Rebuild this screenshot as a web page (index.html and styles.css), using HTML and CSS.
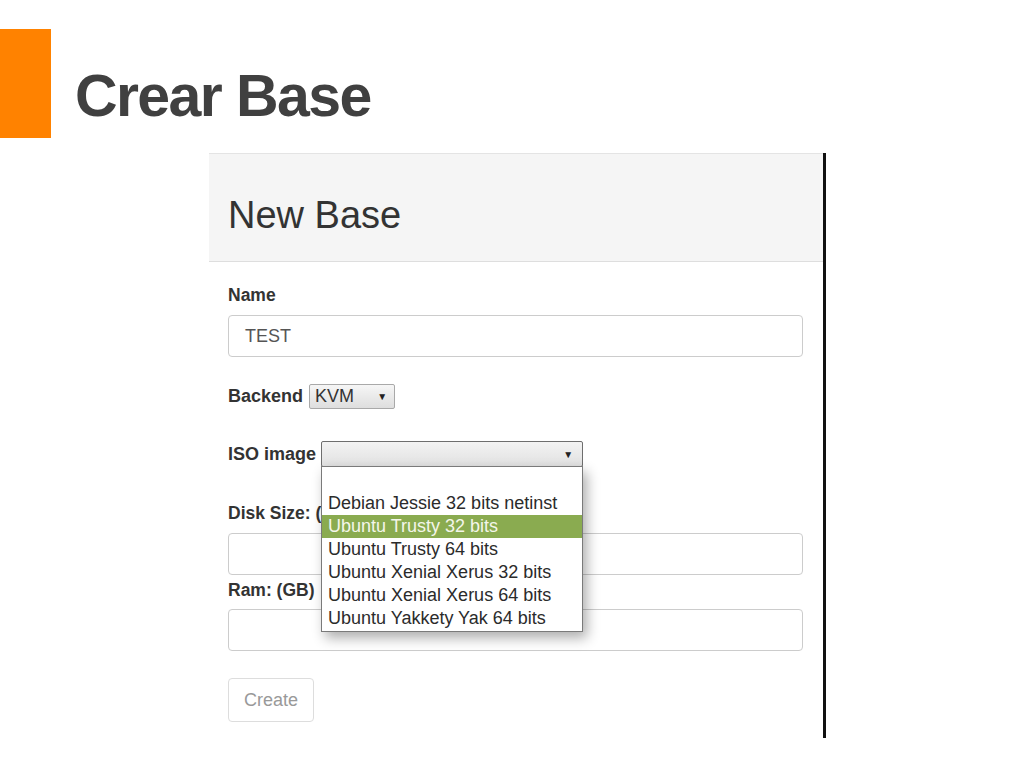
FILE: index.html
```html
<!DOCTYPE html>
<html lang="es">
  <head>
    <meta charset="UTF-8" />
    <meta name="viewport" content="width=device-width, initial-scale=1.0" />
    <title>Crear Base</title>
    <link rel="stylesheet" href="styles.css">
  </head>

  <body>
    <div class="cabecera">
      <div class="barra"></div>
      <h1 class="titulo">Crear Base</h1>
    </div>

    <div class="panel">
      <div class="panel-head">
        <h2>New Base</h2>
      </div>
      <div class="panel-body">
        <label class="etiqueta">Name</label>
        <div class="campo">TEST</div>

        <div class="fila fila-backend">
          <label class="etiqueta">Backend</label>
          <div class="selector selector-kvm">
            <span>KVM</span>
            <span class="flecha">&#9660;</span>
          </div>
        </div>

        <div class="fila fila-iso">
          <label class="etiqueta">ISO image</label>
          <div class="selector selector-iso">
            <span></span>
            <span class="flecha">&#9660;</span>
            <ul class="lista">
              <li></li>
              <li>Debian Jessie 32 bits netinst</li>
              <li class="activo">Ubuntu Trusty 32 bits</li>
              <li>Ubuntu Trusty 64 bits</li>
              <li>Ubuntu Xenial Xerus 32 bits</li>
              <li>Ubuntu Xenial Xerus 64 bits</li>
              <li>Ubuntu Yakkety Yak 64 bits</li>
            </ul>
          </div>
        </div>

        <label class="etiqueta etiqueta-disk">Disk Size: (GB)</label>
        <div class="campo"></div>

        <label class="etiqueta etiqueta-ram">Ram: (GB)</label>
        <div class="campo campo-ram"></div>

        <button class="boton">Create</button>
      </div>
    </div>
  </body>
</html>
```

FILE: styles.css
```css
body {
  margin: 0;
  background-color: #fff;
  font-family: "Liberation Sans", Arial, sans-serif;
}

.cabecera {
  display: flex;
  align-items: flex-start;
  height: 138px;
}

.barra {
  width: 51px;
  height: 109px;
  margin-top: 29px;
  background-color: #ff8200;
}

.titulo {
  margin: 67px 0 0 24px;
  font-size: 59px;
  line-height: 59px;
  letter-spacing: -1.6px;
  font-weight: bold;
  color: #404040;
}

.panel {
  margin: 15px 0 0 209px;
  width: 614px;
  height: 585px;
  border-right: 3px solid #111;
  box-sizing: content-box;
}

.panel-head {
  background-color: #f5f5f5;
  border-top: 1px solid #e4e4e4;
  border-bottom: 1px solid #dedede;
  padding: 42px 19px 27px;
}

.panel-head h2 {
  margin: 0;
  font-size: 38px;
  line-height: 38px;
  font-weight: normal;
  color: #333;
}

.panel-body {
  padding: 0 20px 0 19px;
}

.etiqueta {
  display: block;
  margin-top: 23px;
  margin-bottom: 10px;
  font-size: 17.5px;
  line-height: 20px;
  font-weight: bold;
  color: #333;
}

.campo {
  box-sizing: border-box;
  height: 42px;
  border: 1px solid #ccc;
  border-radius: 4px;
  padding-left: 16px;
  font-size: 18px;
  line-height: 40px;
  color: #555;
}

.fila {
  display: flex;
  align-items: center;
  gap: 6px;
}

.fila .etiqueta {
  margin: 0;
  font-size: 18px;
  line-height: 25px;
}

.fila-backend {
  margin-top: 27px;
}

.fila-iso {
  margin-top: 32px;
  gap: 5px;
}

.selector {
  position: relative;
  box-sizing: border-box;
  display: flex;
  justify-content: space-between;
  align-items: center;
  border-radius: 2px;
  font-size: 18px;
  color: #333;
  background-image: linear-gradient(to bottom, #f6f6f6, #dedede);
}

.selector-kvm {
  width: 86px;
  height: 25px;
  border: 1px solid #a9a9a9;
  padding: 0 7px 0 5px;
}

.selector-iso {
  width: 262px;
  height: 26px;
  border: 1px solid #6e6e6e;
  padding: 0 9px 0 6px;
  background-image: linear-gradient(to bottom, #f3f3f3, #e1e1e1);
}

.flecha {
  font-size: 10px;
  color: #222;
}

.lista {
  position: absolute;
  top: 100%;
  left: -1px;
  width: 262px;
  box-sizing: border-box;
  margin: 0;
  padding: 2px 0 1px;
  list-style: none;
  background-color: #fff;
  border: 1px solid #7a7a7a;
  box-shadow: 4px 6px 12px rgba(0, 0, 0, 0.32);
}

.lista li {
  height: 23px;
  padding-left: 6px;
  font-size: 18px;
  line-height: 23px;
  color: #2b2b2b;
  white-space: nowrap;
}

.lista li.activo {
  background-color: #8aab50;
  color: #f4f6ea;
}

.etiqueta-disk {
  margin-top: 36px;
}

.etiqueta-ram {
  margin-top: 5px;
  margin-bottom: 9px;
}

.boton {
  display: block;
  margin-top: 27px;
  height: 44px;
  padding: 0 15px;
  border: 1px solid #ddd;
  border-radius: 4px;
  background-color: #fff;
  font-family: "Liberation Sans", Arial, sans-serif;
  font-size: 18px;
  color: #999;
}
```
